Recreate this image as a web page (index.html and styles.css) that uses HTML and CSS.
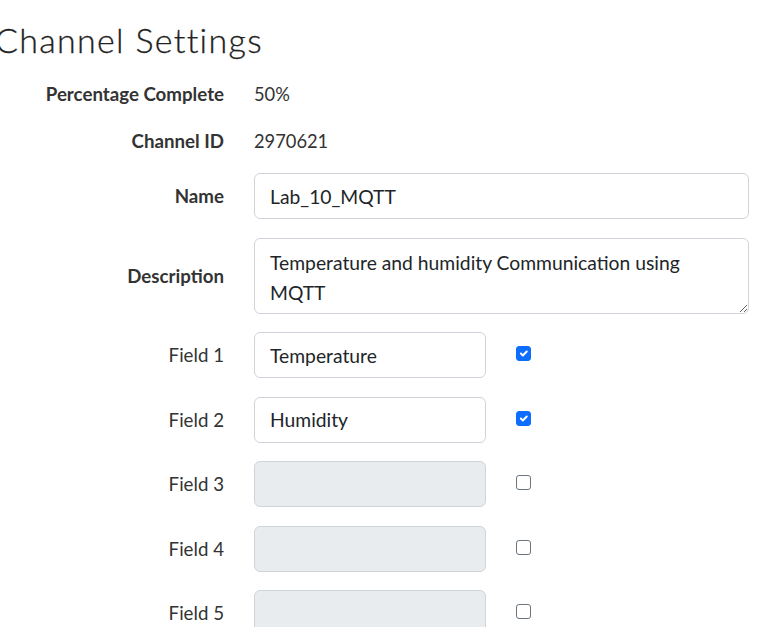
FILE: index.html
```html
<!DOCTYPE html>
<html>
<head>
<meta charset="utf-8">
<link rel="stylesheet" href="styles.css">
</head>
<body>
<div class="page">
  <h1 class="title">Channel Settings</h1>
  <div class="form">
    <div class="row static">
      <div class="label bold">Percentage Complete</div>
      <div class="value">50%</div>
    </div>
    <div class="row static">
      <div class="label bold">Channel ID</div>
      <div class="value">2970621</div>
    </div>
    <div class="row">
      <label class="label bold">Name</label>
      <input class="control wide" type="text" value="Lab_10_MQTT">
    </div>
    <div class="row">
      <label class="label bold">Description</label>
      <textarea class="control wide area">Temperature and humidity Communication using MQTT</textarea>
    </div>
    <div class="row">
      <label class="label">Field 1</label>
      <input class="control narrow" type="text" value="Temperature">
      <input class="check" type="checkbox" checked>
    </div>
    <div class="row">
      <label class="label">Field 2</label>
      <input class="control narrow" type="text" value="Humidity">
      <input class="check" type="checkbox" checked>
    </div>
    <div class="row">
      <label class="label">Field 3</label>
      <input class="control narrow" type="text" disabled>
      <input class="check" type="checkbox">
    </div>
    <div class="row">
      <label class="label">Field 4</label>
      <input class="control narrow" type="text" disabled>
      <input class="check" type="checkbox">
    </div>
    <div class="row">
      <label class="label">Field 5</label>
      <input class="control narrow" type="text" disabled>
      <input class="check" type="checkbox">
    </div>
  </div>
</div>
</body>
</html>
```

FILE: styles.css
```css
html, body {
  margin: 0;
  padding: 0;
  background: #fff;
  overflow: hidden;
}
body {
  font-family: Lato, "Liberation Sans", sans-serif;
  color: #333;
  font-size: 18.7px;
}
.page {
  width: 761px;
}
.title {
  font-family: Lato, sans-serif;
  font-weight: 300;
  font-size: 34px;
  line-height: 40px;
  color: #222;
  margin: 20px 0 0 -5px;
  letter-spacing: 1.3px;
  -webkit-text-stroke: 0.3px #222;
}
.form {
  display: flex;
  flex-direction: column;
  gap: 18.5px;
  margin-top: 20px;
}
.row {
  display: flex;
  align-items: center;
}
.row.static {
  height: 28px;
}
.label {
  width: 224px;
  text-align: right;
  flex: none;
  color: #333;
}
.bold {
  font-weight: 700;
}
.value {
  margin-left: 30px;
  color: #333;
  font-size: 18.3px;
}
.control {
  box-sizing: border-box;
  height: 46px;
  margin-left: 30px;
  border: 1px solid #ced4da;
  border-radius: 6px;
  padding: 0 15px;
  font-family: inherit;
  font-size: 19.3px;
  color: #212529;
  background: #fff;
  outline: none;
}
.control:disabled {
  background: #e9ecef;
}
.wide {
  width: 495px;
}
.narrow {
  width: 232px;
}
.area {
  height: 76px;
  padding: 9px 15px 6px;
  line-height: 30px;
  resize: vertical;
  overflow: hidden;
}
.check {
  appearance: none;
  -webkit-appearance: none;
  margin: 0 0 3px 30px;
  width: 15px;
  height: 15px;
  border: 1px solid #6c757d;
  border-radius: 3px;
  box-sizing: border-box;
  background: #fff;
}
.check:checked {
  background-color: #0d6efd;
  border-color: #0d6efd;
  background-image: url("data:image/svg+xml,%3csvg xmlns='http://www.w3.org/2000/svg' viewBox='0 0 20 20'%3e%3cpath fill='none' stroke='%23fff' stroke-linecap='round' stroke-linejoin='round' stroke-width='3' d='m6 10 3 3 6-6'/%3e%3c/svg%3e");
  background-size: 100% 100%;
}
```
